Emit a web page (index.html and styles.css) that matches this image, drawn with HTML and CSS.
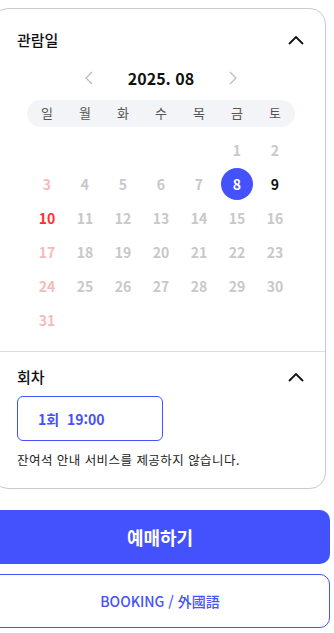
FILE: index.html
```html
<!DOCTYPE html>
<html lang="ko">
<head>
  <meta charset="UTF-8" />
  <meta name="viewport" content="width=device-width, initial-scale=1" />
  <title>예매</title>
  <link rel="stylesheet" href="styles.css">
</head>
<body>

  <div class="card">
    <div class="section">
      <div class="section-head">
        <span class="section-title">관람일</span>
        <svg class="chevron" width="16" height="10" viewBox="0 0 16 10"><polyline points="1,9 8,2 15,9" fill="none" stroke="#111" stroke-width="1.8"/></svg>
      </div>

      <div class="month">
        <svg class="arrow" width="8" height="14" viewBox="0 0 8 14"><polyline points="7,1 1,7 7,13" fill="none" stroke="#bbb" stroke-width="1.2"/></svg>
        <span class="month-label">2025. 08</span>
        <svg class="arrow" width="8" height="14" viewBox="0 0 8 14"><polyline points="1,1 7,7 1,13" fill="none" stroke="#bbb" stroke-width="1.2"/></svg>
      </div>

      <div class="weekdays">
        <span>일</span><span>월</span><span>화</span><span>수</span><span>목</span><span>금</span><span>토</span>
      </div>

      <div class="days">
        <span></span><span></span><span></span><span></span><span></span>
        <span class="day off">1</span><span class="day off">2</span>
        <span class="day sun-off">3</span><span class="day off">4</span><span class="day off">5</span><span class="day off">6</span><span class="day off">7</span>
        <span class="day selected"><b>8</b></span><span class="day on">9</span>
        <span class="day sun">10</span><span class="day off">11</span><span class="day off">12</span><span class="day off">13</span><span class="day off">14</span><span class="day off">15</span><span class="day off">16</span>
        <span class="day sun-off">17</span><span class="day off">18</span><span class="day off">19</span><span class="day off">20</span><span class="day off">21</span><span class="day off">22</span><span class="day off">23</span>
        <span class="day sun-off">24</span><span class="day off">25</span><span class="day off">26</span><span class="day off">27</span><span class="day off">28</span><span class="day off">29</span><span class="day off">30</span>
        <span class="day sun-off">31</span>
      </div>
    </div>

    <div class="section section-time">
      <div class="section-head">
        <span class="section-title">회차</span>
        <svg class="chevron" width="16" height="10" viewBox="0 0 16 10"><polyline points="1,9 8,2 15,9" fill="none" stroke="#111" stroke-width="1.8"/></svg>
      </div>
      <button class="time">1회&nbsp; 19:00</button>
      <p class="note">잔여석 안내 서비스를 제공하지 않습니다.</p>
    </div>
  </div>

  <button class="btn-book">예매하기</button>
  <button class="btn-foreign">BOOKING / 外國語</button>

</body>
</html>
```

FILE: styles.css
```css
* {
  box-sizing: border-box;
}
body {
  margin: 8px 0 0;
  font-family: "Noto Sans CJK KR", "Noto Sans", sans-serif;
  line-height: 1.3;
  color: #111;
  background: #fff;
  overflow: hidden;
}
.card {
  width: 334px;
  margin-left: -8px;
  border: 1px solid #c6cad4;
  border-radius: 16px;
  background: #fff;
}
.section {
  padding: 19px 20px 14px 24px;
}
.section-head {
  display: flex;
  justify-content: space-between;
  align-items: center;
  height: 24px;
}
.section-title {
  font-size: 15px;
  font-weight: 500;
}
.chevron {
  margin-right: 1px;
}
.month {
  display: flex;
  justify-content: center;
  align-items: center;
  gap: 35px;
  margin-top: 12px;
  height: 28px;
}
.month-label {
  font-size: 16px;
  font-weight: 700;
  white-space: nowrap;
}
.weekdays {
  display: grid;
  grid-template-columns: repeat(7, 38px);
  width: 268px;
  margin: 8px auto 0;
  padding: 0 1px;
  height: 27px;
  align-items: center;
  background: #f3f4f7;
  border-radius: 14px;
  font-size: 13px;
  color: #555;
  text-align: center;
}
.days {
  display: grid;
  grid-template-columns: repeat(7, 38px);
  grid-auto-rows: 34px;
  width: 266px;
  margin: 6px auto 0;
  font-size: 14px;
  font-weight: 600;
  text-align: center;
}
.day {
  display: flex;
  justify-content: center;
  align-items: center;
}
.off {
  color: #c8c8c8;
}
.sun-off {
  color: #f7baba;
}
.sun {
  color: #ff2f2f;
}
.on {
  color: #111;
}
.selected b {
  display: flex;
  justify-content: center;
  align-items: center;
  width: 32px;
  height: 32px;
  border-radius: 50%;
  background: #4452fe;
  color: #fff;
  font-weight: 700;
}
.section-time {
  border-top: 1px solid #dcdde1;
  padding-top: 13px;
  padding-bottom: 20px;
}
.time {
  display: block;
  margin-top: 7px;
  width: 146px;
  height: 45px;
  padding: 0 0 0 20px;
  text-align: left;
  background: #fff;
  border: 1px solid #4452fe;
  border-radius: 6px;
  color: #4452fe;
  font-family: inherit;
  font-size: 14px;
  font-weight: 700;
}
.note {
  margin: 11px 0 0;
  font-size: 12.5px;
  letter-spacing: 0.45px;
  color: #222;
}
.btn-book, .btn-foreign {
  display: block;
  width: 340px;
  height: 54px;
  margin-left: -10px;
  border-radius: 10px;
  font-family: inherit;
  cursor: pointer;
}
.btn-book {
  margin-top: 21px;
  border: none;
  background: #4452fe;
  color: #fff;
  font-size: 18px;
  font-weight: 700;
}
.btn-foreign {
  margin-top: 10px;
  background: #fff;
  border: 1.5px solid #4452fe;
  color: #4452fe;
  font-size: 14px;
  font-weight: 500;
}
```
